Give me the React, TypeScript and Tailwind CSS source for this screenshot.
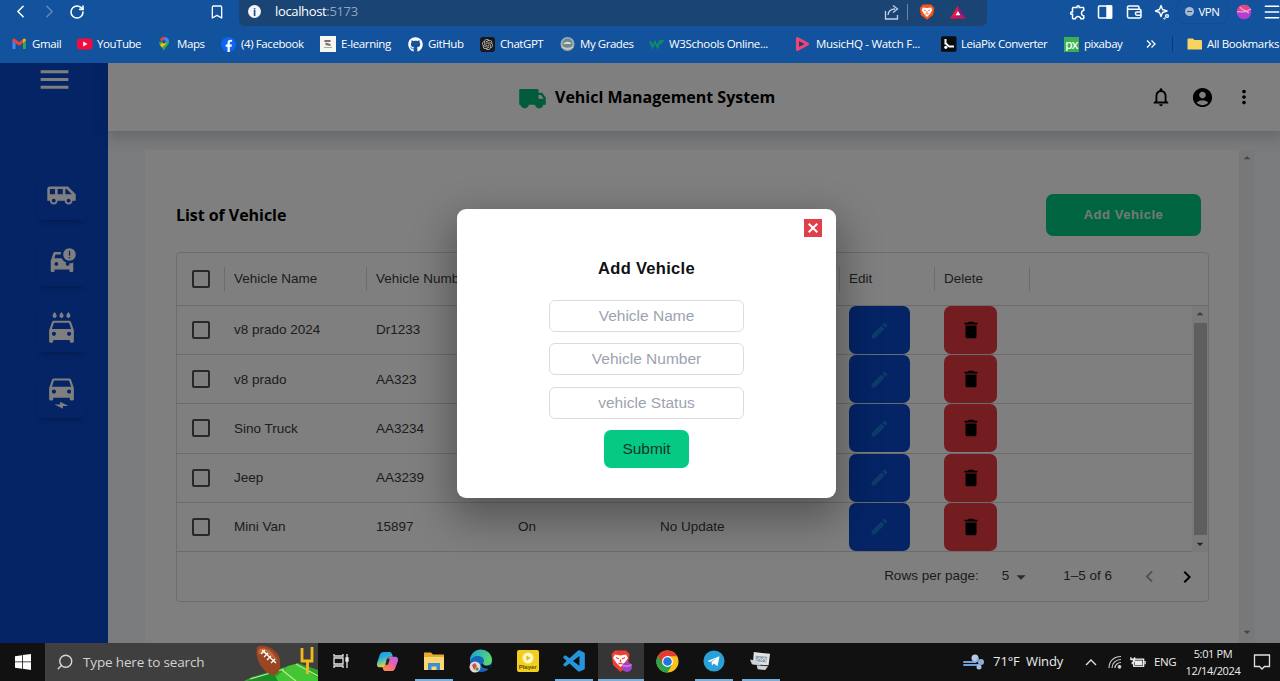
import React from "react";
import {
  MdAccountCircle,
  MdAirportShuttle,
  MdArrowDropDown,
  MdCarCrash,
  MdDelete,
  MdDisabledByDefault,
  MdEdit,
  MdElectricCar,
  MdKeyboardArrowLeft,
  MdKeyboardArrowRight,
  MdLocalCarWash,
  MdMenu,
  MdMoreVert,
  MdNotificationsNone,
  MdOutlineExtension,
} from "react-icons/md";
import { FaFacebook, FaGithub } from "react-icons/fa";
import { RiTruckFill, RiOpenaiFill } from "react-icons/ri";
import { BiLogoVisualStudio } from "react-icons/bi";
import { Bookmark, ChevronLeft, ChevronRight, Menu, RotateCw, Search } from "lucide-react";

/* ---------- brand marks ---------- */

const Gmail = () => (
  <svg viewBox="0 0 16 16" className="size-4">
    <path d="M.5 13V4.200L3.500 6v7z" fill="#4285f4" />
    <path d="M11 13V6l2.800-1.800V13z" fill="#34a853" />
    <path d="M.5 4.500C.5 2.500 2 2.200 3 3l4.200 3.200L11.400 3v3.700L7.200 9.800.5 5z" fill="#ea4335" />
    <path d="M11 3.200c1.300-1.200 2.800-.5 2.800 1.300L11 6.700z" fill="#fbbc04" />
  </svg>
);
const YouTube = () => (
  <svg viewBox="0 0 16 16" className="size-4">
    <rect x="0" y="2.500" width="15.500" height="11" rx="3" fill="#f50a3c" />
    <path d="M6.200 5.500v5L10.500 8z" fill="#fff" />
  </svg>
);
const MapsPin = () => (
  <svg viewBox="0 0 16 16" className="size-4">
    <path d="M7 15C6.500 12 2 10 2 6l5-1 5-1c1 5-4.300 7-5 11z" fill="#34a853" />
    <path d="M3 3.500A5 5 0 0 1 8.500 1L5 6z" fill="#ea4335" />
    <path d="M8.500 1A5 5 0 0 1 12 4L7 9 5 6z" fill="#4285f4" />
    <path d="M3 9l5-5 1 4-4 3.500z" fill="#fbbc04" />
    <circle cx="7" cy="5.800" r="1.800" fill="#14509f" />
  </svg>
);
const Facebook = () => (
  <span className="flex size-[15px] items-center justify-center rounded-full">
    <svg viewBox="0 0 16 16" className="size-[15px]">
      <circle cx="8" cy="8" r="8" fill="#0d65f5" />
      <path d="M7 16V10.300H5V8h2V6.300C7 4.200 8.200 3 10.200 3l1.600.1v2h-1.100c-1 0-1.300.5-1.300 1.200V8h2.300l-.4 2.300H9.400V16z" fill="#fff" />
    </svg>
  </span>
);
const ELearning = () => (
  <svg viewBox="0 0 16 16" className="size-4">
    <rect width="16" height="16" fill="#f7f5ef" />
    <path d="M4.500 4h6v2h-6zM5.500 6.500l5 1.500v2l-5-1z" fill="#7b6f66" />
    <path d="M4 11.500h8" stroke="#aaa" />
  </svg>
);
const ChatGpt = () => (
  <span className="flex size-[15px] items-center justify-center rounded-[3px] bg-[#16181c]">
    <RiOpenaiFill className="size-[13px] text-[#c9c2b8]" />
  </span>
);
const Grades = () => (
  <svg viewBox="0 0 16 16" className="size-4">
    <circle cx="7.500" cy="8" r="7" fill="#9fb0b4" />
    <circle cx="7.500" cy="7.500" r="5" fill="#6f8790" />
    <path d="M3.500 8c1-3 7-3 8 0z" fill="#d6dcda" />
    <path d="M2 11c3 2 8 2 11 0" stroke="#d7cbb4" fill="none" strokeWidth="1.500" />
  </svg>
);
const W3 = () => (
  <svg viewBox="0 0 16 16" className="size-4">
    <path d="M1 5l2.500 6L6 6l2.500 5L11 5M10.500 5h3l-2 3" stroke="#0c8b6c" strokeWidth="2" fill="none" />
  </svg>
);
const MusicHq = () => (
  <svg viewBox="0 0 16 16" className="size-4">
    <path d="M2.500 2.500v11L12.500 8z" fill="#27405f" stroke="#f0437c" strokeWidth="3" strokeLinejoin="round" />
  </svg>
);
const LeiaPix = () => (
  <svg viewBox="0 0 16 16" className="size-4">
    <rect width="15.500" height="15.500" y=".2" rx="1.500" fill="#0a0c10" />
    <path d="M4.500 3v4.500c1.500 0 2 2.500 4 3h4.500" stroke="#fff" strokeWidth="2" fill="none" />
    <circle cx="4.800" cy="11.300" r="1.600" fill="#fff" />
  </svg>
);
const Pixabay = () => (
  <span className="flex size-[15px] items-center justify-center bg-[#3bb04f] font-['Lato'] text-[13px] leading-none tracking-[-0.5px] text-white">
    px
  </span>
);
const BraveLion = ({ className = "size-4" }: { className?: string }) => (
  <svg viewBox="0 0 16 16" className={className}>
    <path d="M4 .5h8L15.300 4l-1.300 7-6 4.800L2 11 .7 4z" fill="#f4561e" />
    <path d="M4 3.500l4 .6 4-.6L13.300 6l-2 3.500L8 13 4.700 9.500 2.700 6z" fill="#fff" />
    <path d="M4.800 5.800l2 1M11.200 5.800l-2 1M8 7v1.800M6.500 9.800h3" stroke="#f4561e" strokeWidth=".9" />
  </svg>
);

const bookmarks = [
  { label: "Gmail", icon: <Gmail />, box: "w-[65px]", text: "tracking-[-0.4px]" },
  { label: "YouTube", icon: <YouTube />, box: "w-[80px]", text: "tracking-[-0.45px]" },
  { label: "Maps", icon: <MapsPin />, box: "w-[64px]", text: "tracking-[-0.4px]" },
  { label: "(4) Facebook", icon: <Facebook />, box: "w-[99px]", text: "tracking-[-0.4px]" },
  { label: "E-learning", icon: <ELearning />, box: "w-[88px] gap-px", text: "tracking-[-0.4px]" },
  { label: "GitHub", icon: <FaGithub className="size-[15px] text-white" />, box: "w-[72px]", text: "tracking-[-0.4px]" },
  { label: "ChatGPT", icon: <ChatGpt />, box: "w-[80px]", text: "tracking-[-0.45px]" },
  { label: "My Grades", icon: <Grades />, box: "w-[89px]", text: "tracking-[-0.45px]" },
  { label: "W3Schools Online...", icon: <W3 />, box: "w-[146px]", text: "tracking-[-0.35px]" },
  { label: "MusicHQ - Watch F...", icon: <MusicHq />, box: "w-[146px] gap-px", text: "tracking-[-0.3px]" },
  { label: "LeiaPix Converter", icon: <LeiaPix />, box: "w-[123px]", text: "tracking-[-0.45px]" },
  { label: "pixabay", icon: <Pixabay />, box: "w-[81px]", text: "tracking-[-0.45px]" },
];

function BrowserChrome() {
  return (
    <div className="flex h-[63px] shrink-0 flex-col bg-[#13529c] font-['Open_Sans','Noto_Sans',sans-serif] text-white">
      <div className="flex h-[26px] items-start">
        <div className="flex h-[23px] w-[239px] shrink-0 items-center">
          <ChevronLeft className="ml-[10px] size-[21px]" strokeWidth={1.8} />
          <ChevronRight className="ml-[8px] size-[21px] text-[#5f89bd]" strokeWidth={1.8} />
          <RotateCw className="ml-[9px] size-4" strokeWidth={2.4} />
          <Bookmark className="ml-[124px] size-4" strokeWidth={2} />
        </div>
        <div className="flex h-[26px] w-[748px] shrink-0 items-center rounded-b-[6px] bg-[#194474] pb-[3px]">
          <span className="ml-[9px] flex size-[13px] items-center justify-center rounded-full bg-[#f3f6fa] text-[10px] leading-none font-bold text-[#194474]">
            i
          </span>
          <span className="ml-[14px] text-[13px] leading-none tracking-[-0.35px]">
            localhost<span className="text-[#8fa6c0]">:5173</span>
          </span>
          <svg viewBox="0 0 16 16" className="ml-auto size-4 text-[#c3d0df]" fill="none" stroke="currentColor" strokeWidth="1.300">
            <path d="M1.500 7v8h12v-4M4 11c.5-4 3-6 7-6M9 1.500L13.500 5 9 8.500" />
          </svg>
          <span className="ml-[7px] h-4 w-px bg-[#6b87a6]" />
          <BraveLion className="ml-[11px] size-4" />
          <svg viewBox="0 0 16 16" className="mr-[21px] ml-[15px] size-4">
            <path d="M8 1.500L0 14.500h8z" fill="#e0203c" />
            <path d="M8 1.500l8 13H8z" fill="#8b1a7b" />
            <path d="M8 7l-2.500 4.500h5z" fill="#fff" />
            <path d="M0 14.500l5.500-3h5l5.500 3z" fill="#c2185b" />
          </svg>
        </div>
        <div className="flex h-[23px] w-[293px] shrink-0 items-center overflow-x-clip">
          <MdOutlineExtension className="ml-[81px] size-[18px] shrink-0 -scale-x-100" />
          <svg viewBox="0 0 16 16" className="ml-[11px] size-4 shrink-0" fill="none" stroke="currentColor" strokeWidth="1.500">
            <rect x="1.500" y="2" width="13" height="12" rx="1" />
            <path d="M10 2h4.500v12H10z" fill="currentColor" />
          </svg>
          <svg viewBox="0 0 16 16" className="ml-[13px] size-4 shrink-0" fill="none" stroke="currentColor" strokeWidth="1.500">
            <path d="M13 5V3.500A1.500 1.500 0 0 0 11.500 2H3a1.500 1.500 0 0 0 0 3.200h10.500A1.500 1.500 0 0 1 15 6.700v5.800a1.500 1.500 0 0 1-1.500 1.500H3a1.500 1.500 0 0 1-1.500-1.500v-9" />
            <path d="M15 8h-4a1.500 1.500 0 0 0 0 3.200h4" />
          </svg>
          <svg viewBox="0 0 16 16" className="ml-[12px] size-4 shrink-0" fill="none" stroke="currentColor" strokeWidth="1.400" strokeLinejoin="round">
            <path d="M7 1.500l1.500 4 4.500 1.500-4.500 1.500L7 12.500 5.500 8.500 1.500 7l4-1.500z" />
            <circle cx="13" cy="12" r="1.400" />
            <circle cx="10.500" cy="14.500" r=".4" />
          </svg>
          <div className="ml-[7px] flex h-[25px] w-[51px] shrink-0 items-center justify-center gap-[4px] rounded-[6px] border border-[#1a4a8a] text-[11.500px] font-medium tracking-[-0.4px]">
            <span className="flex size-[9px] items-center justify-center rounded-full bg-[#a9b9cf]">
              <span className="h-px w-[5px] bg-[#31527f]" />
            </span>
            VPN
          </div>
          <svg viewBox="0 0 16 16" className="ml-[8px] size-4 shrink-0">
            <circle cx="8" cy="8" r="7.300" fill="#b13fd0" />
            <path d="M1 6a7.300 7.300 0 0 1 14 0L9 8z" fill="#e4468a" />
            <path d="M1 8c3-2 5 3 14-3M4 3c2 4 4 2 9 6" stroke="#f5a9d0" strokeWidth="1.200" fill="none" />
          </svg>
          <Menu className="ml-[10px] size-5 shrink-0" strokeWidth={1.8} />
        </div>
      </div>
      <div className="flex h-[36px] items-center pl-[12px] text-[11.500px] leading-none font-medium whitespace-nowrap">
        {bookmarks.map((b) => (
          <div key={b.label} className={`flex shrink-0 items-center ${b.box}`}>
            <span className="flex w-[20px] shrink-0">{b.icon}</span>
            <span className={b.text}>{b.label}</span>
          </div>
        ))}
        <svg viewBox="0 0 12 12" className="size-3 shrink-0" fill="none" stroke="currentColor" strokeWidth="1.300">
          <path d="M2 2.500L5.500 6 2 9.500M6.500 2.500L10 6l-3.500 3.500" />
        </svg>
        <span className="ml-[15px] h-4 w-px bg-[#0d3a75]" />
        <svg viewBox="0 0 16 16" className="ml-[14px] size-4 shrink-0">
          <path d="M.5 3.500a1 1 0 0 1 1-1H6L7.500 4H14a1 1 0 0 1 1 1v8.500H.5z" fill="#f8d35e" />
        </svg>
        <span className="ml-[4px] tracking-[-0.35px]">All Bookmarks</span>
      </div>
    </div>
  );
}

/* ---------- application ---------- */

const menuItems = [
  { key: "fleet", icon: <MdAirportShuttle className="size-[31px]" /> },
  { key: "incidents", icon: <MdCarCrash className="size-[30px]" /> },
  { key: "wash", icon: <MdLocalCarWash className="size-[33px]" /> },
  { key: "electric", icon: <MdElectricCar className="size-[33px]" /> },
];

function Sidebar() {
  return (
    <aside className="flex w-[108px] shrink-0 flex-col bg-[#0848cc] text-white">
      <MdMenu className="mt-[-2px] ml-[36px] h-[37px] w-[37px]" />
      <nav className="mt-[73px] ml-[37px] flex flex-col gap-[17px]">
        {menuItems.map((m) => (
          <div key={m.key} className="flex h-[49px] w-[49px] items-center justify-center rounded-[6px] shadow-[0_6px_6px_-4px_rgba(0,0,0,0.25)]">
            {m.icon}
          </div>
        ))}
      </nav>
    </aside>
  );
}

const vehicles = [
  { name: "v8 prado 2024", number: "Dr1233" },
  { name: "v8 prado", number: "AA323" },
  { name: "Sino Truck", number: "AA3234" },
  { name: "Jeep", number: "AA3239" },
  { name: "Mini Van", number: "15897", status: "On", update: "No Update" },
];

const columns = "grid grid-cols-[47px_142px_142px_142px_189px_95px_95px_1fr]";

const Checkbox = () => (
  <div className="flex items-center pl-[15px]">
    <span className="size-[18px] rounded-[2px] border-2 border-[#505050]" />
  </div>
);

const HeadCell = ({ children }: { children?: React.ReactNode }) => (
  <div className="flex items-center">
    <span className="h-6 w-px bg-[#d8d8d8]" />
    <span className="ml-[9px] whitespace-nowrap">{children}</span>
  </div>
);

function VehicleTable() {
  return (
    <div className="flex h-[350px] w-[1033px] flex-col rounded-[4px] border border-[#dadada] font-['Liberation_Sans',Arial,sans-serif] text-[13.500px] text-[#3a3a3a]">
      <div className={`${columns} h-[53px] shrink-0 border-b border-[#d6d6d6]`}>
        <Checkbox />
        <HeadCell>Vehicle Name</HeadCell>
        <HeadCell>Vehicle Number</HeadCell>
        <HeadCell />
        <HeadCell />
        <HeadCell>Edit</HeadCell>
        <HeadCell>Delete</HeadCell>
        <HeadCell />
      </div>
      <div className="flex h-[246px] shrink-0">
        <div className="flex flex-1 flex-col">
          {vehicles.map((v) => (
            <div key={v.name} className={`${columns} h-[49.200px] items-center border-b border-[#d6d6d6]`}>
              <Checkbox />
              <span className="pt-px pl-[10px]">{v.name}</span>
              <span className="pt-px pl-[10px]">{v.number}</span>
              <span className="pt-px pl-[10px]">{v.status}</span>
              <span className="pt-px pl-[10px]">{v.update}</span>
              <div className="pl-[10px]">
                <div className="flex h-[48px] w-[61px] items-center justify-center rounded-[7px] bg-[#0848cc] text-[#1a78d0]">
                  <MdEdit className="size-[21px]" />
                </div>
              </div>
              <div className="pl-[10px]">
                <div className="flex h-[48px] w-[53px] items-center justify-center rounded-[7px] bg-[#e83a40] text-black">
                  <MdDelete className="size-[22px]" />
                </div>
              </div>
            </div>
          ))}
        </div>
        <div className="flex w-[16px] flex-col items-center justify-between bg-[#f4f4f4]">
          <MdArrowDropDown className="size-4 rotate-180 text-[#777]" />
          <span className="h-[212px] w-[13px] bg-[#bdbdbd]" />
          <MdArrowDropDown className="size-4 text-[#444]" />
        </div>
      </div>
      <div className="flex flex-1 items-center justify-end">
        <span>Rows per page:</span>
        <span className="ml-[23px]">5</span>
        <MdArrowDropDown className="ml-[1px] size-[22px] text-[#555]" />
        <span className="ml-[31px]">1–5 of 6</span>
        <MdKeyboardArrowLeft className="ml-[26px] size-[23px] text-[#a0a0a0]" />
        <MdKeyboardArrowRight className="mr-[9px] ml-[14px] size-[24px] text-black" />
      </div>
    </div>
  );
}

function AddVehicleModal() {
  return (
    <div className="absolute inset-0 flex items-center justify-center bg-black/50 pl-[13px] font-['Liberation_Sans',Arial,sans-serif]">
      <form className="flex h-[289px] w-[379px] flex-col items-center rounded-[9px] bg-white shadow-[0_16px_40px_6px_rgba(0,0,0,0.32)]">
        <MdDisabledByDefault className="mt-[7px] mr-[11px] size-6 self-end text-[#e0404a]" />
        <h2 className="mt-[16px] text-[16.500px] leading-6 font-bold tracking-[0.3px] text-[#111]">Add Vehicle</h2>
        <div className="mt-[20px] flex flex-col gap-[11.500px]">
          {["Vehicle Name", "Vehicle Number", "vehicle Status"].map((p) => (
            <input
              key={p}
              placeholder={p}
              className="h-[32px] w-[195px] rounded-[6px] border border-[#d9dde2] text-center text-[15.500px] placeholder:text-[#9ca3af]"
            />
          ))}
        </div>
        <button type="button" className="mt-[11px] h-[38px] w-[85px] rounded-[7px] bg-[#04ca83] text-[15.500px] text-[#12352a]">
          Submit
        </button>
      </form>
    </div>
  );
}

function VehicleApp() {
  return (
    <div className="relative flex h-[580px] shrink-0 overflow-hidden">
      <Sidebar />
      <div className="flex flex-1 flex-col bg-[#f3f6fa]">
        <header className="z-0 flex h-[68px] shrink-0 items-center bg-white text-black shadow-[0_3px_14px_2px_rgba(40,40,60,0.22)]">
          <RiTruckFill className="ml-[410px] size-[29px] text-[#04b878]" />
          <h1 className="ml-[8px] pb-px font-['Open_Sans','Noto_Sans',sans-serif] text-[16px] font-bold tracking-[-0.02px]">Vehicl Management System</h1>
          <MdNotificationsNone className="ml-auto size-[22px]" />
          <MdAccountCircle className="ml-[19px] size-[23px]" />
          <MdMoreVert className="mr-[25px] ml-[19px] size-[22px]" />
        </header>
        <div className="relative mt-[19px] mr-[26px] ml-[37px] flex flex-1">
          <main className="flex flex-1 flex-col bg-white pt-[44px] pl-[31px]">
            <div className="mb-[16px] flex h-[42px] w-[1025px] items-center justify-between">
              <h2 className="font-['Open_Sans','Noto_Sans',sans-serif] text-[16px] font-bold tracking-[-0.05px] text-black">List of Vehicle</h2>
              <button className="h-[42px] w-[155px] rounded-[7px] bg-[#04ca83] font-['Liberation_Sans',Arial,sans-serif] text-[13px] font-bold tracking-[0.55px] text-[#e8f3ee]">
                Add Vehicle
              </button>
            </div>
            <VehicleTable />
          </main>
          <div className="flex w-[15px] flex-col items-center justify-between bg-[#f1f1f3] pb-[3px] text-[#888]">
            <MdArrowDropDown className="size-4 rotate-180" />
            <MdArrowDropDown className="size-4" />
          </div>
        </div>
      </div>
      <AddVehicleModal />
    </div>
  );
}

/* ---------- taskbar ---------- */

const TaskView = () => (
  <svg viewBox="0 0 18 18" className="size-[18px]" fill="none" stroke="#e6e6e6" strokeWidth="1.300">
    <path d="M2 2v2h9V2M2 16v-2h9v2M2 6h9v6H2zM15 2v14" />
    <path d="M14 6h2v3h-2z" fill="#e6e6e6" />
  </svg>
);
const Copilot = () => (
  <svg viewBox="0 0 24 24" className="size-[23px]">
    <defs>
      <linearGradient id="cpA" x1="0" y1="0" x2=".4" y2="1">
        <stop offset="0" stopColor="#1f8df5" />
        <stop offset=".45" stopColor="#22b4d8" />
        <stop offset="1" stopColor="#f2d43a" />
      </linearGradient>
      <linearGradient id="cpB" x1="1" y1="0" x2=".3" y2="1">
        <stop offset="0" stopColor="#9b6cf4" />
        <stop offset=".5" stopColor="#ee5fa8" />
        <stop offset="1" stopColor="#fb8a45" />
      </linearGradient>
    </defs>
    <path d="M8 2h6c2 0 2.500 1.500 3 3l.5 2h-3c-2 0-2.700 1-3.200 3L10 15c-.5 2-1.500 3-3.500 3H4c-3 0-3.500-2.500-2.700-5L4 5c.7-2 2-3 4-3z" fill="url(#cpA)" />
    <path d="M16 22h-6c-2 0-2.500-1.500-3-3l-.5-1c2 0 3-1 3.500-3l1.500-5c.5-2 1.500-3 3.500-3H20c3 0 3.500 2.500 2.700 5L20 19c-.7 2-2 3-4 3z" fill="url(#cpB)" />
    <path d="M11.500 9h3l-2 6.500H9.700z" fill="#20252c" />
  </svg>
);
const Explorer = () => (
  <svg viewBox="0 0 22 20" className="h-5 w-[22px]">
    <path d="M1 1.500h7l2 2h11v15H1z" fill="#e9a92e" />
    <path d="M1 6h20v13H1z" fill="#fcd670" />
    <path d="M5 19v-7h12v7h-3.500v-3.500h-5V19z" fill="#3b8fd2" />
  </svg>
);
const Edge = () => (
  <svg viewBox="0 0 24 24" className="size-6">
    <defs>
      <linearGradient id="edA" x1="0" y1="0" x2="1" y2=".4">
        <stop offset="0" stopColor="#1b9de2" />
        <stop offset="1" stopColor="#55d86f" />
      </linearGradient>
    </defs>
    <circle cx="12" cy="12" r="11" fill="#1468b8" />
    <path d="M1 12A11 11 0 0 1 23 11c0 4-3 5.500-6 5.500-2 0-3-1-3-2 0-1 1-1 1-3C15 9 12 7 8.500 7S2 9 1 12z" fill="url(#edA)" />
    <path d="M14 14.500c0 1.500 2 2.500 4 2.300 2-.1 3.500-.8 4.500-1.800L20 20l-5-1c-3-1-3.500-4-1-4.500z" fill="#101010" />
    <circle cx="6" cy="18" r="5.500" fill="#ead8d2" />
    <path d="M3 16l3-2 2 3-3 4z" fill="#c5524c" />
    <circle cx="8" cy="20" r="1.700" fill="#4e9360" />
  </svg>
);
const Player = () => (
  <div className="flex size-[22px] flex-col items-center rounded-[2px] bg-[#f2cf1d] pt-[2px]">
    <svg viewBox="0 0 12 12" className="size-[12px]">
      <circle cx="6" cy="6" r="5.500" fill="#fff6c4" />
      <path d="M4.500 3.500v5L8.500 6z" fill="#e0b913" />
    </svg>
    <span className="font-['Liberation_Sans'] text-[6px] leading-[7px] font-bold text-[#5b4c07]">Player</span>
  </div>
);
const BraveTask = () => (
  <svg viewBox="0 0 24 24" className="size-6">
    <path d="M6 1.500h11L20.500 5 19 16l-7.500 7L4 16 2.500 5z" fill="#ee3f35" />
    <path d="M6 5.500l5.500 1L17 5.500 19 9l-3.500 5-4 4-4-4L4 9z" fill="#fff" />
    <path d="M7 8.500l3 1.500M16 8.500L13 10M11.500 10.500v2.500M9.500 14.500h4" stroke="#ee3f35" strokeWidth="1.300" />
    <circle cx="18" cy="18" r="5" fill="#9a45cf" />
    <path d="M13.500 17c3-1 5 2 9-1.500" stroke="#e57cc0" fill="none" strokeWidth="1.500" />
  </svg>
);
const Chrome = () => (
  <svg viewBox="0 0 24 24" className="size-[23px]">
    <circle cx="12" cy="12" r="11.500" fill="#fbc116" />
    <path d="M12 12L2 6.250A11.500 11.500 0 0 0 12 23.500l5-8.500z" fill="#2ba24c" />
    <path d="M12 6.500h10A11.500 11.500 0 0 0 2 6.250L7.200 15z" fill="#e33b2e" />
    <circle cx="12" cy="12" r="5.700" fill="#fff" />
    <circle cx="12" cy="12" r="4.500" fill="#2374e1" />
  </svg>
);
const Telegram = () => (
  <svg viewBox="0 0 24 24" className="size-[22px]">
    <circle cx="12" cy="12" r="11.500" fill="#2aa0d8" />
    <path d="M5 12l13-5.200-2.200 11-4-3-2 2-.5-3.600L15 8.800l-7.300 4.400z" fill="#fff" />
  </svg>
);
const Disk = () => (
  <svg viewBox="0 0 24 22" className="h-[21px] w-[23px]">
    <path d="M5 1l17 2-1.500 12L4 14z" fill="#dfe3e6" />
    <path d="M7 5l12 1-1 6-11-1z" fill="#93a5b1" />
    <path d="M8 10l3-3 2 3 3-3 2 4" stroke="#e9eef1" fill="none" />
    <path d="M1 9l9 2 2 4-9-1zM8 15l12 1-3 4-8-1z" fill="#cfd2d4" />
  </svg>
);

const tasks = [
  { key: "view", icon: <TaskView />, cell: "bg-transparent", bar: "w-0" },
  { key: "copilot", icon: <Copilot />, cell: "bg-transparent", bar: "w-0" },
  { key: "files", icon: <Explorer />, cell: "bg-transparent", bar: "w-[38px]" },
  { key: "edge", icon: <Edge />, cell: "bg-transparent", bar: "w-0" },
  { key: "player", icon: <Player />, cell: "bg-transparent", bar: "w-0" },
  { key: "code", icon: <BiLogoVisualStudio className="size-[26px] text-[#2596dc]" />, cell: "bg-transparent", bar: "w-[38px]" },
  { key: "brave", icon: <BraveTask />, cell: "bg-[#353535]", bar: "w-full" },
  { key: "chrome", icon: <Chrome />, cell: "bg-transparent", bar: "w-0" },
  { key: "telegram", icon: <Telegram />, cell: "bg-transparent", bar: "w-[38px]" },
  { key: "disk", icon: <Disk />, cell: "bg-transparent", bar: "w-[38px]" },
];

function Taskbar() {
  return (
    <div className="flex h-[38px] shrink-0 bg-[#111111] font-['Open_Sans','Noto_Sans',sans-serif] text-[#ececec]">
      <div className="flex w-[45px] shrink-0 items-center justify-center">
        <svg viewBox="0 0 16 16" className="size-4" fill="#fff">
          <path d="M0 2.300L7 1.200v6.300H0zM7.800 1.100L16 0v7.500H7.800zM0 8.300h7v6.400l-7-1zM7.800 8.300H16V16l-8.200-1.200z" />
        </svg>
      </div>
      <div className="flex w-[273px] shrink-0 items-center bg-[#3f3f3f]">
        <Search className="ml-[11px] size-[18px] -scale-x-100 text-[#d8d8d8]" strokeWidth={1.8} />
        <span className="ml-[9px] text-[13.500px] tracking-[-0.15px] text-[#d2d2d2]">Type here to search</span>
        <svg viewBox="0 0 74 38" className="ml-auto h-[38px] w-[74px]">
          <path d="M0 38L8 34 54 20l20 7v11z" fill="#2fa32c" />
          <path d="M28 38l16-15 8-2 22 14v3z" fill="#46c534" />
          <path d="M8 34l20-6 6 10H4z" fill="#1d8a2a" />
          <path d="M38 27l14 11M52 21l22 12M6 36l34-10" stroke="#b5eb8a" strokeWidth="1.300" />
          <path d="M58 5v13h10V4M63.500 18v13" stroke="#f3b81d" strokeWidth="2.800" fill="none" />
          <path d="M13 4C20 0 34 6 36 17c1 8-1 14-6 15C20 32 10 16 13 4z" fill="#9a4524" />
          <path d="M15 6C22 3 30 9 33 18 27 12 20 9 14 11z" fill="#c06b3d" />
          <path d="M18 7l14 13M17 11l4-4M20 14l4-4M23 17l4-4M27 20l4-4" stroke="#fff" strokeWidth="1.300" />
        </svg>
      </div>
      {tasks.map((t) => (
        <div key={t.key} className={`flex w-[46.600px] shrink-0 flex-col items-center ${t.cell}`}>
          <div className="flex h-[36px] items-center">{t.icon}</div>
          <span className={`h-[2px] bg-[#76aede] ${t.bar}`} />
        </div>
      ))}
      <div className="ml-auto flex items-center font-medium">
        <svg viewBox="0 0 24 18" className="h-[18px] w-[24px]" fill="none" strokeLinecap="round">
          <path d="M2 9h11M2 12h15" stroke="#6f9fd4" strokeWidth="2" />
          <circle cx="13" cy="5" r="3.500" fill="#b5c8e4" />
          <path d="M13 9a4 4 0 0 0 3-3" stroke="#8fb0dc" strokeWidth="2" />
          <circle cx="19" cy="9" r="3" fill="#8eaed8" />
          <circle cx="17" cy="14" r="2.500" fill="#a8bfe0" />
        </svg>
        <span className="ml-[7px] text-[13px] tracking-[-0.15px]">71°F&nbsp; Windy</span>
        <svg viewBox="0 0 12 8" className="ml-[22px] h-2 w-3" fill="none" stroke="#e0e0e0" strokeWidth="1.400">
          <path d="M1 7l5-5 5 5" />
        </svg>
        <svg viewBox="0 0 14 14" className="ml-[11px] size-[14px]" fill="none" stroke="#c8c8c8" strokeWidth="1.200">
          <path d="M1 13C1 6 6 1.500 13 1.500M4 13c0-5 4-8.500 9-8.500M7 13c0-3.500 3-5.500 6-5.500" />
          <circle cx="11.500" cy="11.800" r="1.300" fill="#e6e6e6" />
        </svg>
        <svg viewBox="0 0 18 14" className="ml-[7px] h-[14px] w-[17px]" fill="none" stroke="#eee" strokeWidth="1.400">
          <rect x="5" y="4" width="10.500" height="7.500" />
          <path d="M7 6h6.500v3.500H7z" fill="#eee" />
          <path d="M17 6v3.500M2 2v2h4V2M1.500 4.500h4v2l-2 1v2" />
        </svg>
        <span className="ml-[8px] text-[11.500px] tracking-[-0.5px]">ENG</span>
        <div className="ml-[9px] flex w-[56px] flex-col items-center text-[11px] leading-[17px] tracking-[-0.35px]">
          <span>5:01 PM</span>
          <span>12/14/2024</span>
        </div>
        <svg viewBox="0 0 18 18" className="mr-[9px] ml-[12px] size-[18px]" fill="none" stroke="#e0e0e0" strokeWidth="1.300">
          <path d="M1.500 2h15v11.500h-5L9 16l-2.500-2.500h-5z" />
        </svg>
      </div>
    </div>
  );
}

export default function App() {
  return (
    <div className="flex h-[681px] w-[1280px] flex-col overflow-hidden bg-black">
      <BrowserChrome />
      <VehicleApp />
      <Taskbar />
    </div>
  );
}
